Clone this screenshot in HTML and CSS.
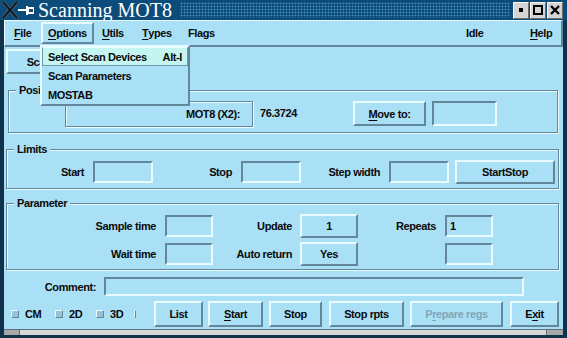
FILE: index.html
```html
<!DOCTYPE html>
<html lang="en">
<head>
  <meta charset="UTF-8">
  <title>Scanning MOT8</title>
  <link rel="stylesheet" href="styles.css">
</head>
<body>
  <div class="titlebar">
    <svg class="wm-icon" width="34" height="20" viewBox="0 0 34 20">
      <path d="M2 2 L16 18 M16 2 L2 18" stroke="#5d6f7c" stroke-width="3.4"/>
      <path d="M2 2 L16 18 M16 2 L2 18" stroke="#101820" stroke-width="2"/>
      <path d="M17 10 H25" stroke="#ffffff" stroke-width="2"/>
      <rect x="25" y="6" width="2" height="9" fill="#ffffff"/>
      <rect x="27" y="7" width="6" height="7" fill="#ffffff"/>
      <rect x="28" y="9" width="4" height="3" fill="#2a4a60"/>
    </svg>
    <span class="title">Scanning MOT8</span>
    <div class="grip"></div>
    <div class="wm-btns">
      <span class="wm-btn"><span class="ico-min"></span></span>
      <span class="wm-btn"><span class="ico-max"></span></span>
      <span class="wm-btn">
        <svg width="10" height="10" viewBox="0 0 10 10"><path d="M1 1 L9 9 M9 1 L1 9" stroke="#000" stroke-width="2.4"/></svg>
      </span>
    </div>
  </div>

  <div class="window">
    <div class="menubar">
      <span class="mi mi-file"><u>F</u>ile</span>
      <span class="mi mi-options open"><u>O</u>ptions</span>
      <span class="mi mi-utils"><u>U</u>tils</span>
      <span class="mi mi-types"><u>T</u>ypes</span>
      <span class="mi mi-flags">Flags</span>
      <span class="mi mi-idle">Idle</span>
      <span class="mi mi-help"><u>H</u>elp</span>
    </div>

    <div class="menu">
      <div class="menu-item sel"><span>Se<u>l</u>ect Scan Devices</span><span>Alt-I</span></div>
      <div class="menu-item"><span>Scan Parameters</span></div>
      <div class="menu-item"><span>MOSTAB</span></div>
    </div>

    <div class="content">
      <button class="btn scan-btn">Scan</button>

      <div class="frame frame-pos">
        <span class="frame-title">Position</span>
        <div class="row">
          <div class="etched motor">MOT8 (X2):</div>
          <span class="value">76.3724</span>
          <button class="btn move-btn"><span><u>M</u>ove to:</span></button>
          <div class="field move-field"></div>
        </div>
      </div>

      <div class="frame frame-limits">
        <span class="frame-title">Limits</span>
        <div class="row">
          <span class="lbl lbl-start">Start</span>
          <div class="field f60"></div>
          <span class="lbl lbl-mid">Stop</span>
          <div class="field f60"></div>
          <span class="lbl lbl-mid">Step width</span>
          <div class="field f60"></div>
          <button class="btn startstop-btn">StartStop</button>
        </div>
      </div>

      <div class="frame frame-param">
        <span class="frame-title">Parameter</span>
        <div class="row">
          <span class="lbl lbl-first">Sample time</span>
          <div class="field f48"></div>
          <span class="lbl lbl-second">Update</span>
          <button class="btn val-btn">1</button>
          <span class="lbl lbl-third">Repeats</span>
          <div class="field f48">1</div>
        </div>
        <div class="row">
          <span class="lbl lbl-first">Wait time</span>
          <div class="field f48"></div>
          <span class="lbl lbl-second">Auto return</span>
          <button class="btn val-btn">Yes</button>
          <span class="lbl lbl-third"></span>
          <div class="field f48"></div>
        </div>
      </div>

      <div class="comment-row">
        <span class="lbl comment-lbl">Comment:</span>
        <div class="field comment-field"></div>
      </div>

      <div class="action-row">
        <span class="check check-cm"><span class="box"></span>CM</span>
        <span class="check check-2d"><span class="box"></span>2D</span>
        <span class="check check-3d"><span class="box"></span>3D</span>
        <span class="check check-x"><span class="box"></span></span>
        <button class="btn act-list">List</button>
        <button class="btn act-start"><span><u>S</u>tart</span></button>
        <button class="btn act-stop">Stop</button>
        <button class="btn act-rpts">Stop rpts</button>
        <button class="btn act-prep disabled"><span>P<u>r</u>epare regs</span></button>
        <button class="btn act-exit"><span>E<u>x</u>it</span></button>
      </div>
    </div>

    <div class="statusbar">
      <span class="sb-left"></span>
      <span class="sb-mid"></span>
      <span class="sb-right"></span>
    </div>
  </div>
</body>
</html>
```

FILE: styles.css
```css
* {
  box-sizing: border-box;
}

body {
  margin: 0;
  width: 567px;
  height: 338px;
  overflow: hidden;
  background: #10324a;
  font-family: "Liberation Sans", Arial, sans-serif;
  font-weight: bold;
  font-size: 11px;
  letter-spacing: -0.4px;
  white-space: nowrap;
  color: #0a0a0a;
}

u {
  text-underline-offset: 2px;
}

/* window manager title */
.titlebar {
  display: flex;
  align-items: center;
  height: 20px;
  background: #0c4c7a;
}

.wm-icon {
  flex: none;
  margin-left: 1px;
}

.title {
  margin-left: 3px;
  font-family: "Liberation Serif", "Times New Roman", serif;
  font-weight: normal;
  font-size: 20px;
  line-height: 20px;
  letter-spacing: 0;
  color: #ffffff;
}

.grip {
  flex: 1;
  height: 16px;
  margin: 0 3px 0 8px;
  background-image: radial-gradient(circle, #4a93c4 0.8px, transparent 1.1px);
  background-size: 3px 3px;
}

.wm-btns {
  display: flex;
  gap: 1px;
  margin-right: 4px;
}

.wm-btn {
  width: 16px;
  height: 17px;
  display: flex;
  align-items: center;
  justify-content: center;
  background: #d4d4d4;
  border: 1px solid;
  border-color: #f6f6f6 #6c6c6c #6c6c6c #f6f6f6;
}

.ico-min {
  width: 4px;
  height: 4px;
  background: #000000;
}

.ico-max {
  width: 10px;
  height: 10px;
  border: 2px solid #000000;
}

/* application window */
.window {
  position: relative;
  display: flex;
  flex-direction: column;
  height: 315px;
  margin: 0 4px;
  background: #aae0f6;
}

.menubar {
  display: flex;
  align-items: center;
  height: 27px;
  border-style: solid;
  border-width: 1px 2px 2px 1px;
  border-color: #eafbff #62869a #62869a #eafbff;
}

.mi {
  flex: none;
  display: flex;
  align-items: center;
  height: 22px;
  padding: 0 5px;
  border: 2px solid transparent;
}

.mi.open {
  border-color: #eafbff #62869a #62869a #eafbff;
}

.mi-file { margin-left: 2px; width: 34px; }
.mi-options { width: 53px; }
.mi-utils { width: 41px; padding-left: 6px; }
.mi-types { width: 46px; }
.mi-flags { width: 40px; }
.mi-idle { margin-left: 238px; width: 64px; }
.mi-help { width: 36px; }

.menu {
  position: absolute;
  left: 36px;
  top: 25px;
  z-index: 2;
  width: 150px;
  background: #aae0f6;
  border: 2px solid;
  border-color: #eafbff #62869a #62869a #eafbff;
}

.menu-item {
  display: flex;
  align-items: center;
  justify-content: space-between;
  height: 19px;
  padding: 0 6px;
}

.menu-item.sel {
  padding: 0 5px;
  background: #c4f5f1;
  border: 1px solid;
  border-color: #e4ffff #6b9aa8 #6b9aa8 #6b9aa8;
}

.content {
  display: flex;
  flex-direction: column;
  padding-top: 2px;
}

.btn {
  display: flex;
  align-items: center;
  justify-content: center;
  padding: 0;
  font: inherit;
  letter-spacing: inherit;
  color: inherit;
  background: #aae0f6;
  border: 2px solid;
  border-color: #eafbff #62869a #62869a #eafbff;
}

.btn.disabled {
  color: #7fa6b8;
}

.field {
  display: flex;
  align-items: center;
  padding: 0 3px;
  background: #aae0f6;
  border: 2px solid;
  border-color: #62869a #eafbff #eafbff #62869a;
}

.etched {
  border: 1px solid #62869a;
  box-shadow: inset 1px 1px 0 #eafbff, 1px 1px 0 #eafbff;
}

.scan-btn {
  align-self: flex-start;
  width: 66px;
  height: 25px;
  margin-left: 2px;
}

/* framed groups */
.frame {
  position: relative;
  border: 1px solid #62869a;
  box-shadow: inset 1px 1px 0 #eafbff, 1px 1px 0 #eafbff;
}

.frame-title {
  position: absolute;
  top: -8px;
  left: 7px;
  padding: 0 3px;
  line-height: 15px;
  background: #aae0f6;
}

.row {
  display: flex;
  align-items: center;
}

.lbl {
  flex: none;
  text-align: right;
}

.frame-pos {
  margin: 16px 5px 0 4px;
}

.frame-pos .row {
  align-items: flex-start;
  padding: 10px 0 5px;
}

.motor {
  display: flex;
  align-items: center;
  justify-content: flex-end;
  width: 188px;
  height: 26px;
  margin-left: 56px;
  padding-right: 12px;
}

.value {
  width: 100px;
  padding: 6px 0 0 7px;
}

.move-btn {
  width: 73px;
  height: 25px;
}

.move-field {
  width: 65px;
  height: 25px;
  margin-left: 6px;
}

.frame-limits {
  margin: 16px 4px 0 2px;
}

.frame-limits .row {
  height: 24px;
  margin: 10px 0 4px;
}

.lbl-start { width: 77px; margin-right: 9px; }
.lbl-mid { width: 79px; margin-right: 9px; }

.f60 {
  width: 60px;
  height: 22px;
}

.startstop-btn {
  width: 100px;
  height: 24px;
  margin-left: 6px;
}

.frame-param {
  margin: 14px 4px 0 2px;
  padding: 10px 0 3px;
}

.frame-param .row {
  height: 24px;
}

.frame-param .row + .row {
  margin-top: 4px;
}

.lbl-first { width: 149px; margin-right: 9px; }
.lbl-second { width: 79px; margin-right: 8px; }
.lbl-third { width: 78px; margin-right: 9px; }

.f48 {
  width: 48px;
  height: 22px;
}

.val-btn {
  width: 58px;
  height: 24px;
}

.comment-row {
  display: flex;
  align-items: center;
  margin-top: 7px;
}

.comment-lbl {
  width: 92px;
  margin-right: 8px;
}

.comment-field {
  width: 420px;
  height: 19px;
}

/* bottom action row */
.action-row {
  display: flex;
  align-items: center;
  height: 26px;
  margin-top: 5px;
}

.check {
  flex: none;
  display: flex;
  align-items: center;
}

.check .box {
  width: 8px;
  height: 8px;
  margin-right: 6px;
  background: #98c2d4;
  border: 1px solid;
  border-color: #eafbff #62869a #62869a #eafbff;
}

.check-cm { width: 44px; margin-left: 7px; }
.check-2d { width: 41px; }
.check-3d { width: 38px; }
.check-x { width: 8px; }

.action-row .btn {
  height: 26px;
}

.act-list { width: 49px; margin-left: 12px; }
.act-start { width: 55px; margin-left: 5px; }
.act-stop { width: 53px; margin-left: 6px; }
.act-rpts { width: 75px; margin-left: 7px; }
.act-prep { width: 93px; margin-left: 6px; }
.act-exit { width: 49px; margin-left: 7px; }

.statusbar {
  display: flex;
  height: 6px;
  margin-top: auto;
  border-top: 1px solid #5f7080;
  background: #d8d8d8;
}

.sb-left {
  width: 16px;
  background: #a8a8a8;
  border-right: 1px solid #5f6f7a;
}

.sb-mid {
  flex: 1;
}

.sb-right {
  width: 17px;
  background: #a8a8a8;
  border-left: 1px solid #5f6f7a;
}
```
